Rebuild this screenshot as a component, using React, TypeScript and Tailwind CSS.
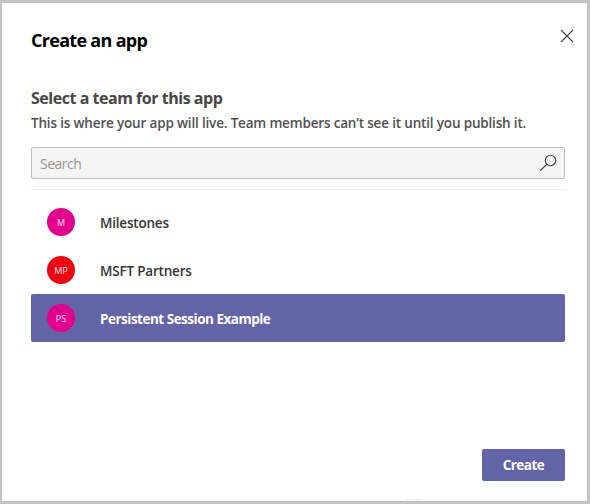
const teams = [
  { initials: 'M', name: 'Milestones', color: 'bg-[#e3008c]', spacing: 'tracking-[-0.2px]' },
  { initials: 'MP', name: 'MSFT Partners', color: 'bg-[#ee0410]', spacing: 'tracking-[-0.2px]' },
  { initials: 'PS', name: 'Persistent Session Example', color: 'bg-[#e3008c]', spacing: 'tracking-[-0.5px]', selected: true },
];

export default function App() {
  return (
    <div className="relative flex h-[504px] w-[590px] flex-col border-t-[3px] border-r-[3px] border-b-[3px] border-l-2 border-[#c3c3c3] bg-white pr-[22px] pl-[29px] font-['Open_Sans','Noto_Sans',sans-serif] whitespace-nowrap">
      <header className="flex h-[82px] items-start justify-between pt-[26px]">
        <h1 className="-mt-px text-[18px] leading-6 font-bold tracking-[-0.7px] text-black">Create an app</h1>
        <button aria-label="Close" className="-mr-[9px]">
          <svg width="14" height="14" viewBox="0 0 14 14" fill="none" stroke="#484644" strokeWidth="1.1">
            <path d="M1 1L13 13M13 1L1 13" />
          </svg>
        </button>
      </header>
      <h2 className="text-[16px] leading-[26px] font-bold tracking-[-0.47px] text-[#484644]">Select a team for this app</h2>
      <p className="text-[13.5px] leading-6 font-semibold tracking-[-0.17px] text-[#505050]">
        This is where your app will live. Team members can’t see it until you publish it.
      </p>
      <div className="mt-3 flex h-8 shrink-0 items-center justify-between rounded-[2px] border border-[#bfbfbf] bg-[#f4f4f4] pr-[7px] pl-2">
        <span className="text-[14px] tracking-[-0.5px] text-[#979593]">Search</span>
        <svg width="18" height="18" viewBox="0 0 18 18" fill="none" stroke="#3b3a39" strokeWidth="1.1">
          <circle cx="11.5" cy="6.5" r="5.2" />
          <path d="M7.8 10.2L1.2 16.8" />
        </svg>
      </div>
      <div className="mt-[10px] border-t border-[#f0f0f0]" />
      <ul className="mt-2">
        {teams.map((team) => (
          <li
            key={team.name}
            className={`flex h-12 items-center rounded-[2px] pl-4 ${team.selected ? 'bg-[#6264a7] font-bold text-white' : 'font-semibold text-[#353433]'}`}
          >
            <span className={`flex size-7 items-center justify-center rounded-full pt-px text-[9px] font-normal text-white/90 ${team.color}`}>
              {team.initials}
            </span>
            <span className={`ml-[25px] pt-[2px] text-[13.5px] ${team.spacing}`}>{team.name}</span>
          </li>
        ))}
      </ul>
      <button className="mt-[107px] h-8 w-[83px] shrink-0 self-end rounded-[2px] bg-[#6264a7] text-[13.5px] font-bold tracking-[-0.5px] text-white">
        Create
      </button>
      <div className="absolute bottom-0 left-[403px] h-[2px] w-[18px] rounded-t-full bg-[#f3f3f3]" />
    </div>
  );
}
